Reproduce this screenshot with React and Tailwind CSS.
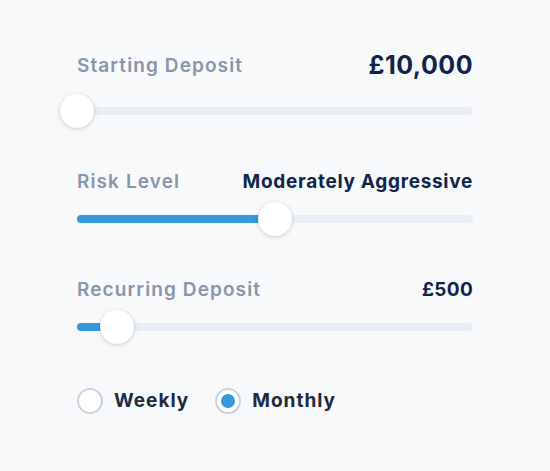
import React from "react";

const Slider = ({ fill, thumb }) => (
  <div className="relative h-2 rounded-full bg-[#e9edf6]">
    <div className={`h-2 rounded-full bg-[#3498db] ${fill}`} />
    <div
      className={`absolute top-1/2 -translate-x-1/2 -translate-y-1/2 w-[34px] h-[34px] rounded-full bg-white shadow-[0_1px_4px_rgba(15,35,70,0.22)] ${thumb}`}
    />
  </div>
);

const Row = ({ label, value, valueClass }) => (
  <div className="flex h-8 items-center justify-between">
    <span className="text-[19px] font-semibold tracking-[1.1px] text-[#8795aa]">{label}</span>
    <span className={`font-bold text-[#10244a] ${valueClass}`}>{value}</span>
  </div>
);

const Radio = ({ label, checked }) => (
  <label className="flex items-center gap-[11px]">
    <span className="flex h-[26px] w-[26px] items-center justify-center rounded-full border-2 border-[#c8d2de] bg-white">
      {checked && <span className="h-[14px] w-[14px] rounded-full bg-[#3498db]" />}
    </span>
    <span className="text-[19px] font-bold tracking-[1px] text-[#1d2a3d]">{label}</span>
  </label>
);

const App = () => {
  return (
    <div
      className="min-h-screen bg-[#f8f9fb] pl-[77px] pt-[50px]"
      style={{ fontFamily: "Inter, 'Noto Sans', sans-serif" }}
    >
      <div className="w-[396px]">
        <Row label="Starting Deposit" value="£10,000" valueClass="text-[25px] tracking-[0.5px]" />
        <div className="mt-[25px]">
          <Slider fill="w-0" thumb="left-0" />
        </div>

        <div className="mt-[51px]">
          <Row label="Risk Level" value="Moderately Aggressive" valueClass="text-[19px] tracking-[0.7px]" />
        </div>
        <div className="mt-[17px]">
          <Slider fill="w-1/2" thumb="left-1/2" />
        </div>

        <div className="mt-[51px]">
          <Row label="Recurring Deposit" value="£500" valueClass="text-[19px] tracking-[0.3px]" />
        </div>
        <div className="mt-[17px]">
          <Slider fill="w-[10%]" thumb="left-[10%]" />
        </div>

        <div className="mt-[56px] flex items-center gap-[26px]">
          <Radio label="Weekly" />
          <Radio label="Monthly" checked />
        </div>
      </div>
    </div>
  );
};

export default App;
